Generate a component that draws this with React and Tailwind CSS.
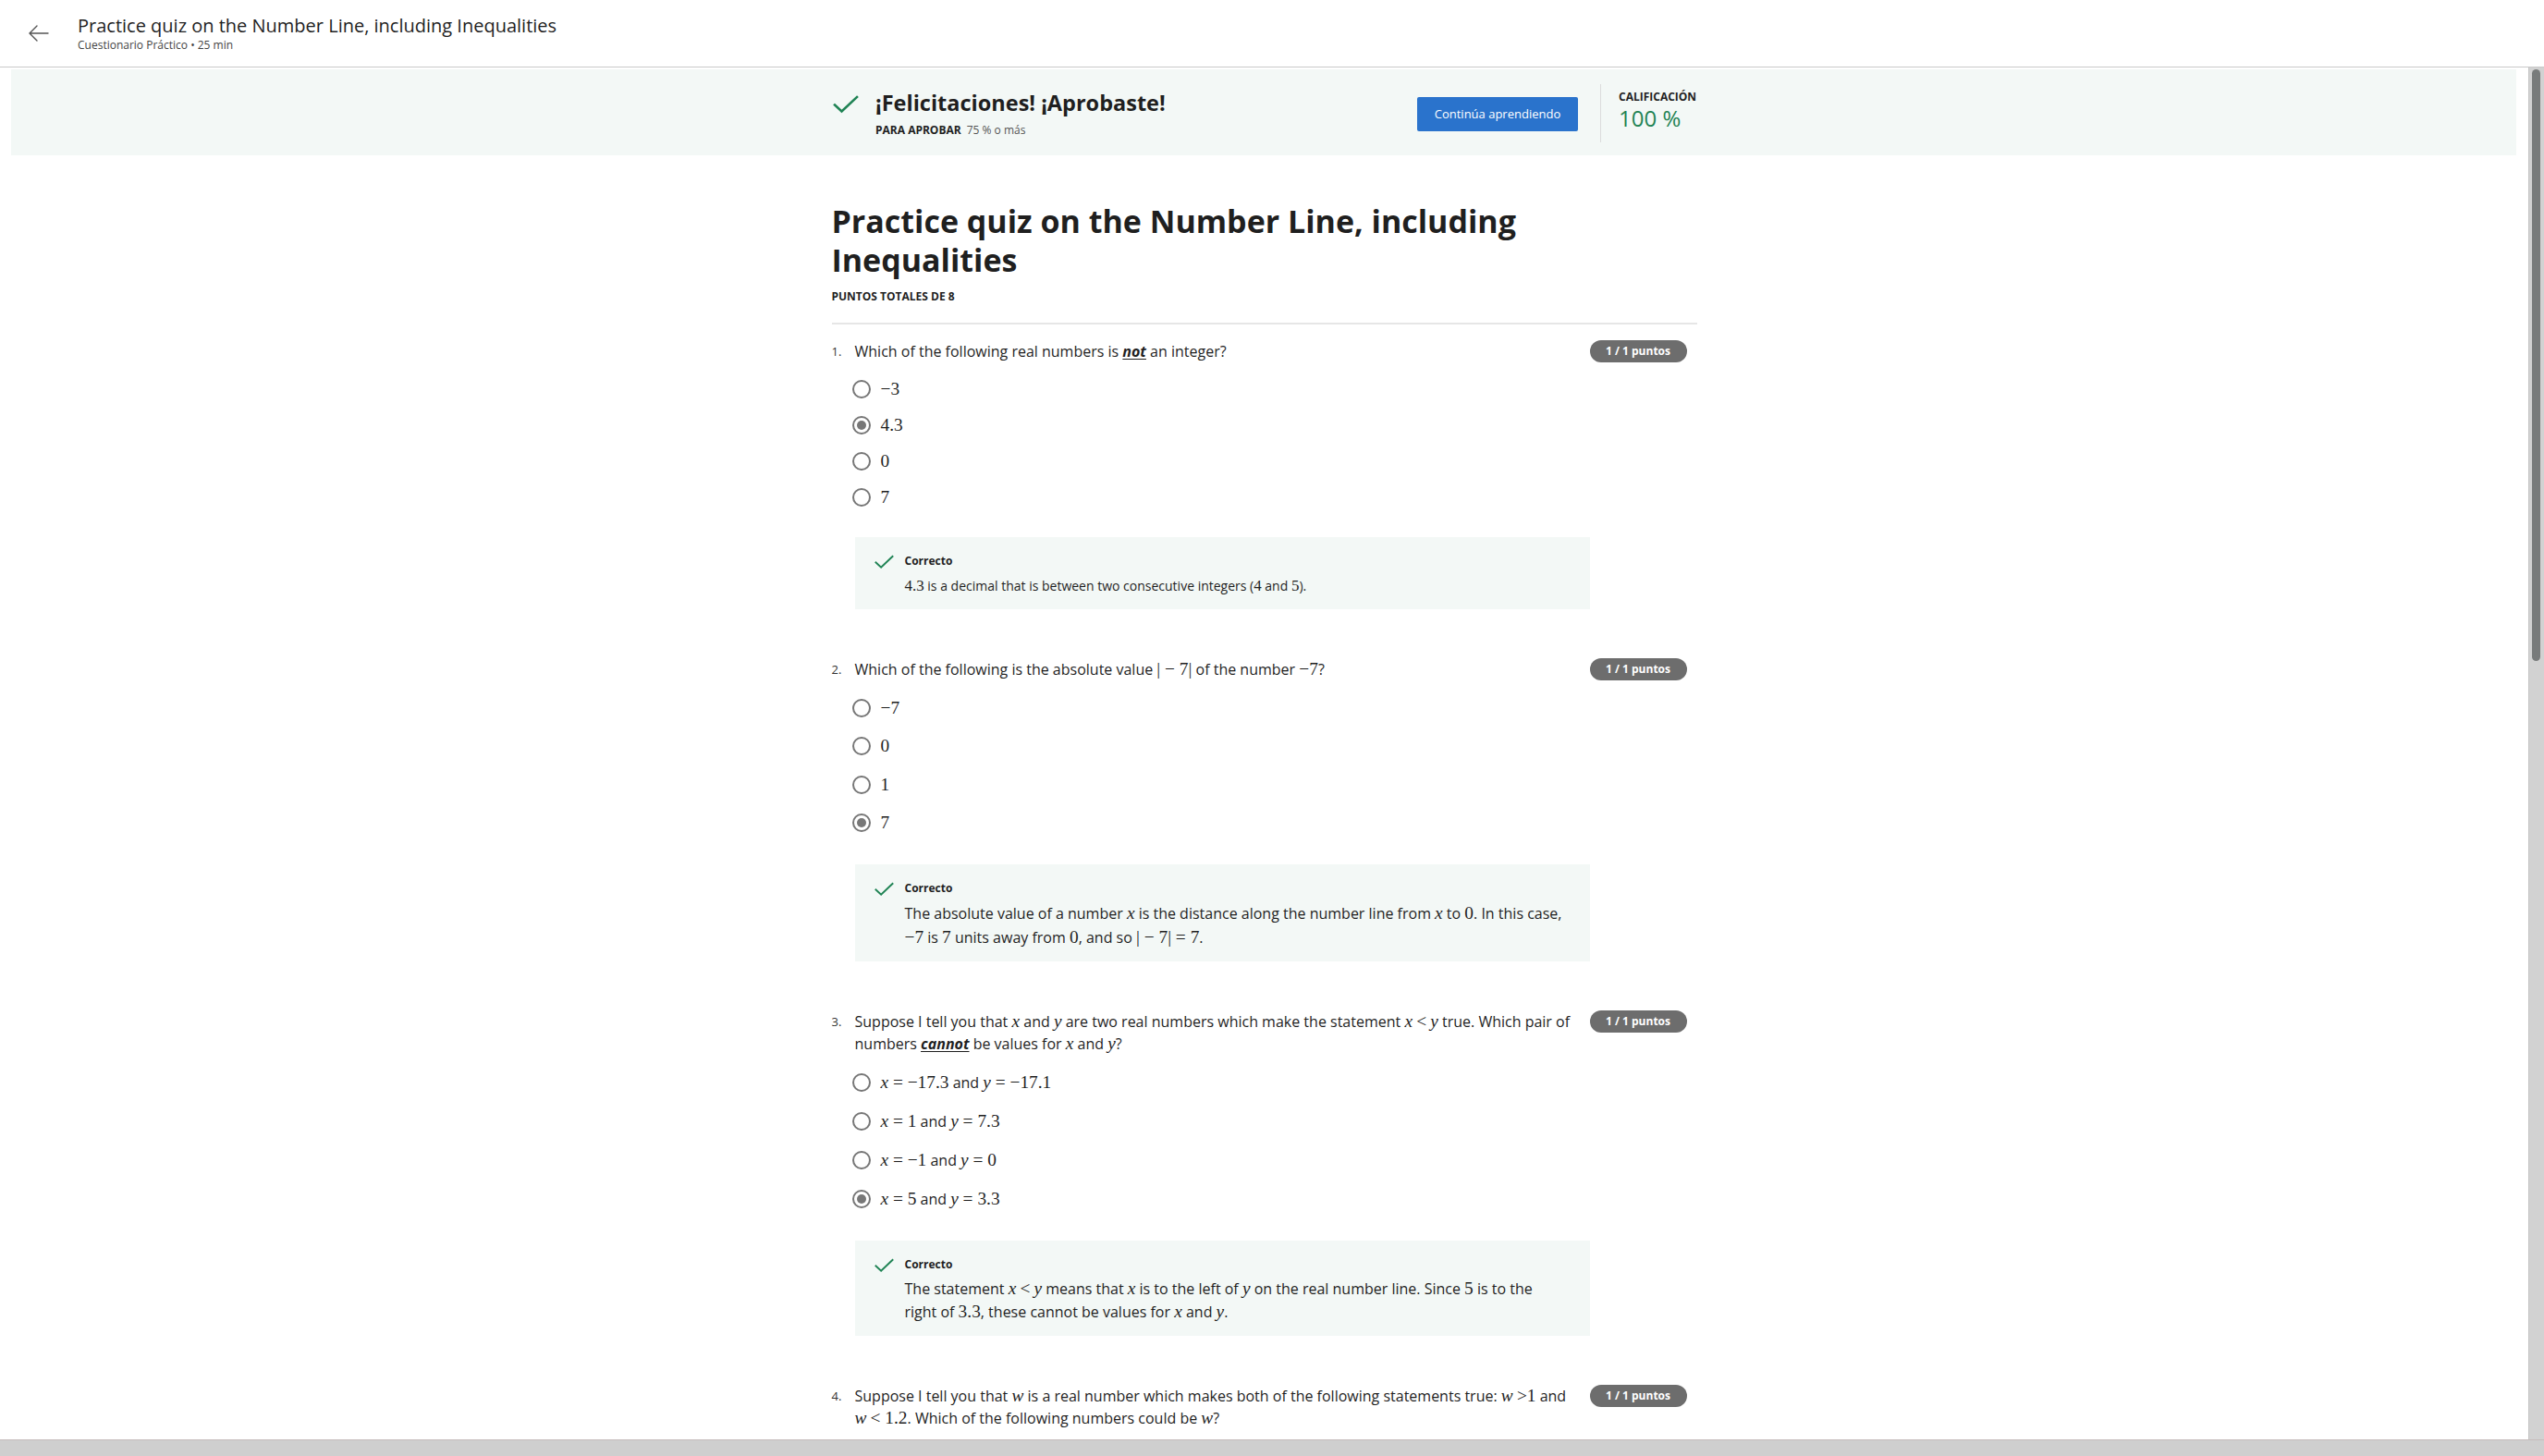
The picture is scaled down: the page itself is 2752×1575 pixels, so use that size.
import React from 'react';

function M({ children }) {
  return <span className="font-['Liberation_Serif',serif] text-[1.21em] leading-none">{children}</span>;
}

function V({ children }) {
  return <span className="font-['Liberation_Serif',serif] italic text-[1.21em] leading-none">{children}</span>;
}

function CheckIcon({ className }) {
  return (
    <svg className={className} viewBox="0 0 28 20" fill="none" stroke="#1f8354" strokeWidth="2.6" strokeLinecap="square">
      <path d="M2 10.5 L9.5 17.5 L26 2" />
    </svg>
  );
}

function Radio({ checked }) {
  return (
    <span className="w-[20px] h-[20px] rounded-full border-2 border-[#777] flex items-center justify-center shrink-0">
      {checked && <span className="w-[10px] h-[10px] rounded-full bg-[#777]" />}
    </span>
  );
}

const questions = [
  {
    n: '1.',
    rowH: 'h-[39px]',
    fbSize: 'text-[14px] leading-[25px]',
    text: (
      <>
        Which of the following real numbers is{' '}
        <strong className="italic underline underline-offset-2">not</strong> an integer?
      </>
    ),
    options: [<M>−3</M>, <M>4.3</M>, <M>0</M>, <M>7</M>],
    selected: 1,
    feedback: (
      <>
        <M>4.3</M> is a decimal that is between two consecutive integers (<M>4</M> and <M>5</M>).
      </>
    ),
  },
  {
    n: '2.',
    rowH: 'h-[41.5px]',
    fbSize: 'text-[16px] leading-[26px]',
    text: (
      <>
        Which of the following is the absolute value <M>| − 7|</M> of the number <M>−7</M>?
      </>
    ),
    options: [<M>−7</M>, <M>0</M>, <M>1</M>, <M>7</M>],
    selected: 3,
    feedback: (
      <>
        The absolute value of a number <V>x</V> is the distance along the number line from <V>x</V> to{' '}
        <M>0</M>. In this case, <M>−7</M> is <M>7</M> units away from <M>0</M>, and so <M>| − 7| = 7</M>.
      </>
    ),
  },
  {
    n: '3.',
    rowH: 'h-[42px]',
    fbSize: 'text-[16px] leading-[25px]',
    text: (
      <>
        Suppose I tell you that <V>x</V> and <V>y</V> are two real numbers which make the statement{' '}
        <V>x</V> <M>&lt;</M> <V>y</V> true. Which pair of numbers{' '}
        <strong className="italic underline underline-offset-2">cannot</strong> be values for <V>x</V> and{' '}
        <V>y</V>?
      </>
    ),
    options: [
      <><V>x</V><M> = −17.3</M> and <V>y</V><M> = −17.1</M></>,
      <><V>x</V><M> = 1</M> and <V>y</V><M> = 7.3</M></>,
      <><V>x</V><M> = −1</M> and <V>y</V><M> = 0</M></>,
      <><V>x</V><M> = 5</M> and <V>y</V><M> = 3.3</M></>,
    ],
    selected: 3,
    feedback: (
      <>
        The statement <V>x</V> <M>&lt;</M> <V>y</V> means that <V>x</V> is to the left of <V>y</V> on the real
        number line. Since <M>5</M> is to the right of <M>3.3</M>, these cannot be values for <V>x</V> and{' '}
        <V>y</V>.
      </>
    ),
  },
];

function Badge() {
  return (
    <div className="w-[105px] h-[24px] rounded-full bg-[#6d6d6d] text-white text-[12px] font-bold flex items-center justify-center">
      1 / 1 puntos
    </div>
  );
}

function Question({ q, first }) {
  return (
    <div className={`flex ${first ? 'mt-[17px]' : 'mt-[53px]'}`}>
      <div className="w-[25px] text-[13px] leading-[24px] text-[#333]">{q.n}</div>
      <div className="flex-1">
        <div className="text-[16px] leading-[24px] text-[#1f1f1f] pr-2">{q.text}</div>
        {q.options && (
          <div className="mt-[9px]">
            {q.options.map((o, i) => (
              <div key={i} className={`flex items-center gap-[11px] -ml-[3px] ${q.rowH}`}>
                <Radio checked={i === q.selected} />
                <span className="text-[16px] text-[#1f1f1f]">{o}</span>
              </div>
            ))}
          </div>
        )}
        {q.feedback && (
          <div className="mt-[24px] bg-[#f3f8f6] pt-[18px] pb-[13px] pl-[21px] pr-[27px] flex">
            <CheckIcon className="w-[21px] h-[16px] mt-[1px] shrink-0" />
            <div className="ml-[12px]">
              <div className="text-[12px] leading-[16px] font-bold text-[#1f1f1f]">Correcto</div>
              <div className={`mt-[6px] text-[#1f1f1f] ${q.fbSize}`}>{q.feedback}</div>
            </div>
          </div>
        )}
      </div>
      <div className="w-[116px] pr-[11px]">
        <Badge />
      </div>
    </div>
  );
}

export default function App() {
  return (
    <div className="w-[2752px] h-[1575px] flex flex-col overflow-hidden bg-white font-['Open_Sans',sans-serif] text-[#1f1f1f]">
      {/* Header */}
      <header className="h-[73px] shrink-0 border-b border-[#c9c9c9] flex items-center pl-[30px]">
        <svg className="w-[24px] h-[20px]" viewBox="0 0 24 20" fill="none" stroke="#555" strokeWidth="1.4" strokeLinecap="round">
          <path d="M22 10 H2 M10 2 L2 10 L10 18" />
        </svg>
        <div className="ml-[30px]">
          <div className="text-[20px] leading-[26px] text-[#1f1f1f]">Practice quiz on the Number Line, including Inequalities</div>
          <div className="text-[12px] leading-[16px] text-[#444]">Cuestionario Práctico • 25 min</div>
        </div>
      </header>

      <div className="flex flex-1 min-h-0">
        <main className="flex-1 overflow-hidden">
          {/* Result banner */}
          <div className="mt-[2px] ml-[12px] mr-[13px] h-[93px] bg-[#f3f8f6]">
            <div className="w-[936px] mx-auto flex items-start">
              <div className="flex-1 flex pt-[21px]">
                <CheckIcon className="w-[28px] h-[20px] mt-[7px] ml-[2px]" />
                <div className="ml-[18px]">
                  <div className="text-[23.5px] leading-[30px] font-bold text-[#1f1f1f]">¡Felicitaciones! ¡Aprobaste!</div>
                  <div className="mt-[7px] text-[12px] leading-[16px]">
                    <span className="font-bold">PARA APROBAR</span>
                    <span className="ml-[6px] text-[#555]">75 % o más</span>
                  </div>
                </div>
              </div>
              <button className="mt-[30px] w-[174px] h-[37px] bg-[#2a73cc] text-white text-[13px] rounded-[2px]">
                Continúa aprendiendo
              </button>
              <div className="mt-[16px] ml-[24px] w-px h-[63px] bg-[#dcdcdc]" />
              <div className="ml-[19px] mt-[22px] w-[84px]">
                <div className="text-[12px] leading-[16px] font-bold whitespace-nowrap">CALIFICACIÓN</div>
                <div className="text-[24px] leading-[30px] text-[#1f8354]">100 %</div>
              </div>
            </div>
          </div>

          {/* Quiz column */}
          <div className="w-[936px] mx-auto">
            <h1 className="mt-[50px] text-[34px] leading-[42px] font-bold text-[#1f1f1f]">
              Practice quiz on the Number Line, including Inequalities
            </h1>
            <div className="mt-[11px] text-[12px] leading-[16px] font-bold">PUNTOS TOTALES DE 8</div>
            <div className="mt-[20px] h-[2px] bg-[#e6e6e6]" />

            {questions.map((q, i) => (
              <Question key={q.n} q={q} first={i === 0} />
            ))}

            <Question
              q={{
                n: '4.',
                text: (
                  <>
                    Suppose I tell you that <V>w</V> is a real number which makes both of the following statements
                    true: <V>w</V> <M>&gt;1</M> and{' '}
                    <span className="whitespace-nowrap">
                      <V>w</V> <M>&lt; 1.2</M>
                    </span>
                    . Which of the following numbers could be <V>w</V>?
                  </>
                ),
              }}
            />
          </div>
        </main>

        {/* vertical scrollbar */}
        <div className="w-[17px] shrink-0 bg-[#d2d2d2] border-l border-[#c4c4c4] pt-[2px] pl-[3px]">
          <div className="w-[9px] h-[640px] rounded-full bg-[#787b7b]" />
        </div>
      </div>

      {/* horizontal scrollbar */}
      <div className="h-[18px] shrink-0 bg-[#cfcfcf] border-t border-[#c6bcbc]" />
    </div>
  );
}
